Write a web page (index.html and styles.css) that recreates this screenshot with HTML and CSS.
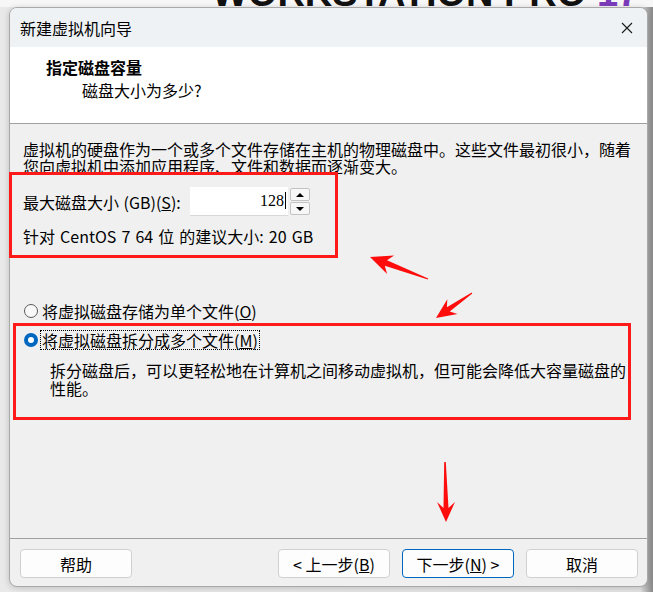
FILE: index.html
```html
<html>
<head>
    <link rel="stylesheet" href="styles.css">
</head>
<body>
<div class="desk">
    <div class="banner"><div class="banner-text">WORKSTATION PRO <span class="ver">17</span></div></div>

    <!-- dialog window -->
    <div class="window">
        <div class="titlebar">
            <span>新建虚拟机向导</span>
            <svg class="close" width="12" height="12" viewBox="0 0 12 12"><path d="M1 1 L11 11 M11 1 L1 11" stroke="#1a1a1a" stroke-width="1.1" fill="none"/></svg>
        </div>

        <div class="header">
            <div class="h-title">指定磁盘容量</div>
            <div class="h-sub">磁盘大小为多少?</div>
        </div>

        <div class="content">
            <p class="intro">虚拟机的硬盘作为一个或多个文件存储在主机的物理磁盘中。这些文件最初很小，随着<br>您向虚拟机中添加应用程序、文件和数据而逐渐变大。</p>

            <div class="size-row">
                <label class="size-label">最大磁盘大小 (GB)(<u>S</u>):</label>
                <div class="spin-input">128<i class="caret"></i></div>
                <div class="spin-btns">
                    <span class="spin-btn"><i class="tri-up"></i></span>
                    <span class="spin-btn"><i class="tri-down"></i></span>
                </div>
            </div>
            <div class="hint">针对 CentOS 7 64 位 的建议大小: 20 GB</div>

            <div class="radio-row first">
                <span class="radio"></span>
                <span class="radio-label">将虚拟磁盘存储为单个文件(<u>O</u>)</span>
            </div>
            <div class="radio-row second">
                <span class="radio on"></span>
                <span class="radio-label focus">将虚拟磁盘拆分成多个文件(<u>M</u>)</span>
            </div>
            <p class="desc">拆分磁盘后，可以更轻松地在计算机之间移动虚拟机，但可能会降低大容量磁盘的<br>性能。</p>
        </div>

        <div class="footer">
            <button class="btn">帮助</button>
            <span class="spacer"></span>
            <button class="btn">&lt; 上一步(<u>B</u>)</button>
            <button class="btn primary">下一步(<u>N</u>) &gt;</button>
            <button class="btn">取消</button>
        </div>
    </div>

    <!-- red annotations drawn over the screenshot -->
    <svg class="marks" width="653" height="592" viewBox="0 0 653 592">
        <rect x="10.5" y="173.5" width="326" height="83" fill="none" stroke="#ff1a1a" stroke-width="3"/>
        <rect x="14.5" y="324.5" width="615" height="94" fill="none" stroke="#ff1a1a" stroke-width="3"/>
        <polygon points="428.2,278.5 387,260.2 394.1,255.5 370,257 387.1,274.1 384.8,265.8 427.8,279.5" fill="#ff0d0d"/>
        <polygon points="471.7,292.6 446.9,307.3 447.3,299.2 436,318 457.5,314 449.7,311.5 472.3,293.4" fill="#ff0d0d"/>
        <polygon points="444.2,462 445.8,462 448.5,508 455,502 446,522 437,502 443.5,508" fill="#ff0d0d"/>
    </svg>
</div>
</body>
</html>
```

FILE: styles.css
```css
body {
    margin: 0;
    background: #e2e2e2;
    font-family: "Noto Sans CJK SC", sans-serif;
    font-size: 16px;
    color: #000;
}

.desk {
    position: relative;
    width: 653px;
    height: 592px;
    overflow: hidden;
    background: linear-gradient(90deg, #e9e9e9 0, #e4e4e4 640px, #8c8c8c 652px);
}

.banner {
    height: 7px;
    overflow: hidden;
    background: #f7f7f7;
    padding-left: 212px;
    white-space: nowrap;
}

.banner-text {
    margin-top: -28px;
    font-family: "Liberation Sans", sans-serif;
    font-weight: bold;
    font-size: 38px;
    color: #111;
}

.ver {
    color: #7a3bb8;
}

.window {
    margin-left: 9px;
    width: 639px;
    height: 580px;
    box-sizing: border-box;
    border: 1px solid #a9a9a9;
    border-radius: 8px;
    overflow: hidden;
    background: #f0f0f0;
    display: flex;
    flex-direction: column;
    box-shadow: 0 1px 6px rgba(0, 0, 0, 0.18);
}

.titlebar {
    height: 39px;
    flex: 0 0 39px;
    background: #eef2f5;
    display: flex;
    align-items: center;
    justify-content: space-between;
    padding: 0 14px 0 10px;
}

.header {
    height: 76px;
    flex: 0 0 76px;
    background: #fff;
    border-bottom: 1px solid #a0a0a0;
    box-sizing: content-box;
}

.h-title {
    font-weight: bold;
    line-height: 18px;
    padding: 11px 0 0 36px;
}

.h-sub {
    line-height: 18px;
    padding: 5px 0 0 72px;
}

.content {
    flex: 1;
    padding: 17px 0 0 13px;
}

.intro {
    margin: 0;
    line-height: 17px;
    white-space: nowrap;
}

.size-row {
    display: flex;
    align-items: center;
    height: 29px;
    margin-top: 12px;
}

.size-label {
    flex: 0 0 167px;
    word-spacing: 1px;
}

.spin-input {
    width: 98px;
    height: 29px;
    box-sizing: border-box;
    background: #fff;
    border-bottom: 1px solid #d8d8d8;
    font-family: "Liberation Serif", serif;
    font-size: 16px;
    line-height: 28px;
    text-align: right;
    padding-right: 2px;
}

.caret {
    display: inline-block;
    width: 1px;
    height: 17px;
    background: #000;
    vertical-align: -3px;
    margin-left: 1px;
}

.spin-btns {
    margin-left: 2px;
    display: flex;
    flex-direction: column;
    gap: 1px;
}

.spin-btn {
    width: 20px;
    height: 13px;
    box-sizing: border-box;
    border: 1px solid #c4c4c4;
    border-radius: 2px;
    background: #f7f7f7;
    display: flex;
    align-items: center;
    justify-content: center;
}

.tri-up {
    border-left: 4px solid transparent;
    border-right: 4px solid transparent;
    border-bottom: 4px solid #000;
}

.tri-down {
    border-left: 4px solid transparent;
    border-right: 4px solid transparent;
    border-top: 4px solid #000;
}

.hint {
    margin-top: 12px;
    line-height: 17px;
    word-spacing: 1.5px;
}

.radio-row {
    display: flex;
    align-items: center;
    height: 18px;
    padding-left: 1px;
}

.radio-row.first {
    margin-top: 57px;
}

.radio-row.second {
    margin-top: 11px;
}

.radio {
    width: 14px;
    height: 14px;
    box-sizing: border-box;
    border: 1px solid #5a5a5a;
    border-radius: 50%;
    background: #f8f8f8;
    margin-right: 4px;
}

.radio.on {
    border: 4px solid #0067c0;
    background: #fff;
}

.radio-label {
    line-height: 18px;
}

.focus {
    outline: 1px dotted #000;
    padding: 0 1px;
    margin-left: -1px;
}

.desc {
    margin: 12px 0 0 27px;
    line-height: 18px;
    white-space: nowrap;
}

.footer {
    flex: 0 0 48px;
    border-top: 1px solid #a0a0a0;
    display: flex;
    gap: 12px;
    padding: 10px 9px 0 10px;
    box-sizing: border-box;
}

.spacer {
    flex: 1;
}

.btn {
    width: 112px;
    height: 29px;
    background: #fdfdfd;
    border: 1px solid #d0d0d0;
    border-radius: 4px;
    font-family: "Noto Sans CJK SC", sans-serif;
    font-size: 16px;
    color: #000;
    padding: 0;
}

.btn.primary {
    border-color: #0067c0;
}

.marks {
    position: absolute;
    left: 0;
    top: 0;
    pointer-events: none;
}
```
